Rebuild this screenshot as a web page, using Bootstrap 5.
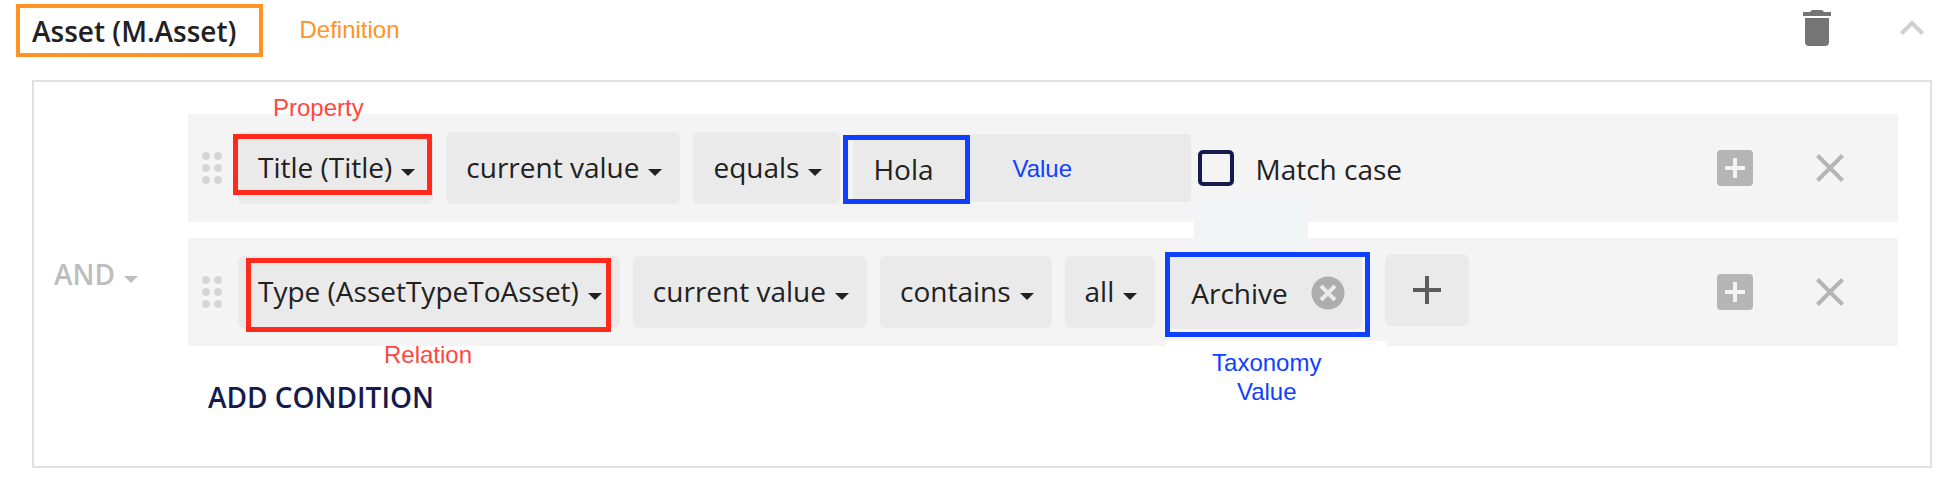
<!DOCTYPE html>
<html lang="en">
<head>
<meta charset="utf-8">
<meta name="viewport" content="width=device-width, initial-scale=1">
<title>Asset (M.Asset)</title>
<link href="https://cdn.jsdelivr.net/npm/bootstrap@5.3.0/dist/css/bootstrap.min.css" rel="stylesheet">
<style>
body { font-family: "Open Sans", "Noto Sans", sans-serif; font-size: 28px; line-height: 40px; color: #212121; background: #fff; }
svg { display: block; }
.icon-btn { padding: 0; border: 0; background: none; color: #b5b5b5; }
.top-bar { padding: 4px 22px 0 16px; }
.def-title { font-size: 28px; line-height: 43px; font-weight: 600; border: 4px solid #ff9326; padding: 2px 23px 0 12px; }
.note { font-family: "Liberation Sans", Arial, sans-serif; font-size: 24px; line-height: 29px; white-space: nowrap; }
.note-orange { color: #ff9326; margin: 11px 0 0 36px; }
.note-red { color: #ff4740; }
.note-blue { color: #0f3fff; }
.trash { color: #757575; margin-top: 6px; }
.chevron { color: #cfcfcf; margin: 16px 0 0 68px; }
.panel { border: 2px solid #e0e0e0; margin: 23px 14px 20px 32px; padding: 32px 32px 32px 0; }
.operator { width: 154px; padding-left: 20px; }
.text-btn { border: 0; background: none; padding: 0; font-weight: 600; white-space: nowrap; }
.operator .text-btn { color: #bdbdbd; }
.add-btn { color: #141b4d; margin: 31px 0 1px 20px; }
.caret::after { content: ""; display: inline-block; margin-left: 9px; vertical-align: 2px; border: 7px solid transparent; border-top-color: currentColor; border-bottom: 0; }
.conditions { gap: 16px; }
.condition { background: #f4f4f4; height: 108px; padding: 0 54px 0 14px; }
.fields { gap: 13px; margin-left: 16px; }
.pill { background: #eaeaea; border: 0; border-radius: 6px; height: 72px; padding: 0 18px 2px 20px; color: #212121; white-space: nowrap; }
.field-input { background: #eaeaea; border: 0; border-radius: 4px; width: 338px; height: 68px; padding: 2px 20px 0 20px; color: #212121; }
.tick { appearance: none; width: 36px; height: 36px; border: 4px solid #141b4d; border-radius: 5px; margin: 0 21px 0 0; }
.match { margin-left: 7px; }
.match label { padding-top: 2px; }
.row-tools { gap: 63px; }
.chip { background: #eaeaea; border-radius: 6px; height: 74px; width: 194px; padding: 2px 17px 0 23px; }
.chip .icon-btn { color: #adadad; }
.more { width: 84px; margin: 0 0 4px 10px; color: #5c5c5c; padding: 0; }
/* annotation frames and captions drawn over the controls */
.frame { position: absolute; border: 5px solid; pointer-events: none; z-index: 2; }
.frame-red { border-color: #ff2a1c; }
.frame-blue { border-color: #0f3fff; }
.caption { position: absolute; z-index: 3; }
.frame-title { left: -5px; right: 1px; top: 2px; bottom: 9px; }
.frame-type { left: 8px; right: 9px; top: 2px; bottom: -4px; }
.frame-hola { left: -10px; width: 127px; top: 1px; bottom: -2px; }
.frame-archive { left: -3px; right: -8px; top: -3px; bottom: -8px; }
.cap-property { left: 35px; top: -39px; }
.cap-relation { left: 146px; top: 84px; }
.cap-value { left: 159px; top: 20px; }
.cap-taxonomy { left: -2px; width: 221px; top: 86px; padding: 7px 20px 0 0; background: #fff; text-align: center; }
.shade { position: absolute; left: -4px; top: 48px; width: 114px; height: 56px; background: #f0f4f5; z-index: 1; }
</style>
</head>
<body>
<header class="top-bar d-flex align-items-start">
  <h1 class="def-title mb-0">Asset (M.Asset)</h1>
  <span class="note note-orange">Definition</span>
  <button class="icon-btn trash ms-auto" type="button" aria-label="Delete definition">
    <svg width="30" height="36" viewBox="0 0 30 36" fill="currentColor"><path d="M1 2h7q1-2 3-2h8q2 0 3 2h7v4H1zM3 8h24v24q0 4-4 4H7q-4 0-4-4z"/></svg>
  </button>
  <button class="icon-btn chevron" type="button" aria-label="Collapse">
    <svg width="24" height="15" viewBox="0 0 24 15" fill="none" stroke="currentColor" stroke-width="4"><path d="M1.500 13.500 12 3l10.500 10.500"/></svg>
  </button>
</header>

<main class="panel d-flex">
  <div class="operator d-flex align-items-center flex-shrink-0">
    <button class="text-btn caret" type="button">AND</button>
  </div>
  <div class="flex-grow-1 pb-3">
    <div class="conditions d-flex flex-column">
      <div class="condition d-flex align-items-center">
        <svg width="20" height="32" viewBox="0 0 20 32" fill="#d6d6d6"><circle cx="4" cy="4" r="4"/><circle cx="16" cy="4" r="4"/><circle cx="4" cy="16" r="4"/><circle cx="16" cy="16" r="4"/><circle cx="4" cy="28" r="4"/><circle cx="16" cy="28" r="4"/></svg>
        <div class="fields d-flex align-items-center">
          <div class="position-relative">
            <button class="pill caret d-block" type="button">Title (Title)</button>
            <span class="frame frame-red frame-title"></span>
            <span class="note note-red caption cap-property">Property</span>
          </div>
          <button class="pill caret" type="button">current value</button>
          <button class="pill caret" type="button">equals</button>
          <div class="position-relative">
            <input class="field-input d-block" type="text" value="Hola" aria-label="Value">
            <span class="frame frame-blue frame-hola"></span>
            <span class="note note-blue caption cap-value">Value</span>
          </div>
        </div>
        <div class="match position-relative d-flex align-items-center">
          <input class="tick" type="checkbox" id="match-case">
          <label for="match-case" class="text-nowrap">Match case</label>
          <span class="shade"></span>
        </div>
        <div class="row-tools d-flex align-items-center ms-auto">
          <button class="icon-btn" type="button" aria-label="Add">
            <svg width="36" height="36" viewBox="0 0 36 36"><rect width="36" height="36" rx="4" fill="currentColor"/><path d="M8 18h20M18 8v20" stroke="#f4f4f4" stroke-width="4"/></svg>
          </button>
          <button class="icon-btn" type="button" aria-label="Remove">
            <svg width="28" height="28" viewBox="0 0 28 28" stroke="currentColor" stroke-width="4"><path d="M1.500 1.500l25 25M26.500 1.500l-25 25"/></svg>
          </button>
        </div>
      </div>

      <div class="condition d-flex align-items-center">
        <svg width="20" height="32" viewBox="0 0 20 32" fill="#d6d6d6"><circle cx="4" cy="4" r="4"/><circle cx="16" cy="4" r="4"/><circle cx="4" cy="16" r="4"/><circle cx="16" cy="16" r="4"/><circle cx="4" cy="28" r="4"/><circle cx="16" cy="28" r="4"/></svg>
        <div class="fields d-flex align-items-center">
          <div class="position-relative">
            <button class="pill caret d-block" type="button">Type (AssetTypeToAsset)</button>
            <span class="frame frame-red frame-type"></span>
            <span class="note note-red caption cap-relation">Relation</span>
          </div>
          <button class="pill caret" type="button">current value</button>
          <button class="pill caret" type="button">contains</button>
          <button class="pill caret" type="button">all</button>
          <div class="position-relative">
            <div class="chip d-flex align-items-center justify-content-between">
              <span>Archive</span>
              <button class="icon-btn" type="button" aria-label="Remove Archive">
                <svg width="34" height="34" viewBox="0 0 34 34"><circle cx="17" cy="17" r="16.500" fill="currentColor"/><path d="M10 10l14 14M24 10L10 24" stroke="#eaeaea" stroke-width="4"/></svg>
              </button>
            </div>
            <span class="frame frame-blue frame-archive"></span>
            <span class="note note-blue caption cap-taxonomy">Taxonomy<br>Value</span>
          </div>
          <button class="pill more d-flex align-items-center justify-content-center" type="button" aria-label="Add value">
            <svg width="28" height="28" viewBox="0 0 28 28" stroke="currentColor" stroke-width="4"><path d="M0 14h28M14 0v28"/></svg>
          </button>
        </div>
        <div class="row-tools d-flex align-items-center ms-auto">
          <button class="icon-btn" type="button" aria-label="Add">
            <svg width="36" height="36" viewBox="0 0 36 36"><rect width="36" height="36" rx="4" fill="currentColor"/><path d="M8 18h20M18 8v20" stroke="#f4f4f4" stroke-width="4"/></svg>
          </button>
          <button class="icon-btn" type="button" aria-label="Remove">
            <svg width="28" height="28" viewBox="0 0 28 28" stroke="currentColor" stroke-width="4"><path d="M1.500 1.500l25 25M26.500 1.500l-25 25"/></svg>
          </button>
        </div>
      </div>
    </div>
    <button class="text-btn add-btn" type="button">ADD CONDITION</button>
  </div>
</main>
<script src="https://cdn.jsdelivr.net/npm/bootstrap@5.3.0/dist/js/bootstrap.bundle.min.js"></script>
</body>
</html>
